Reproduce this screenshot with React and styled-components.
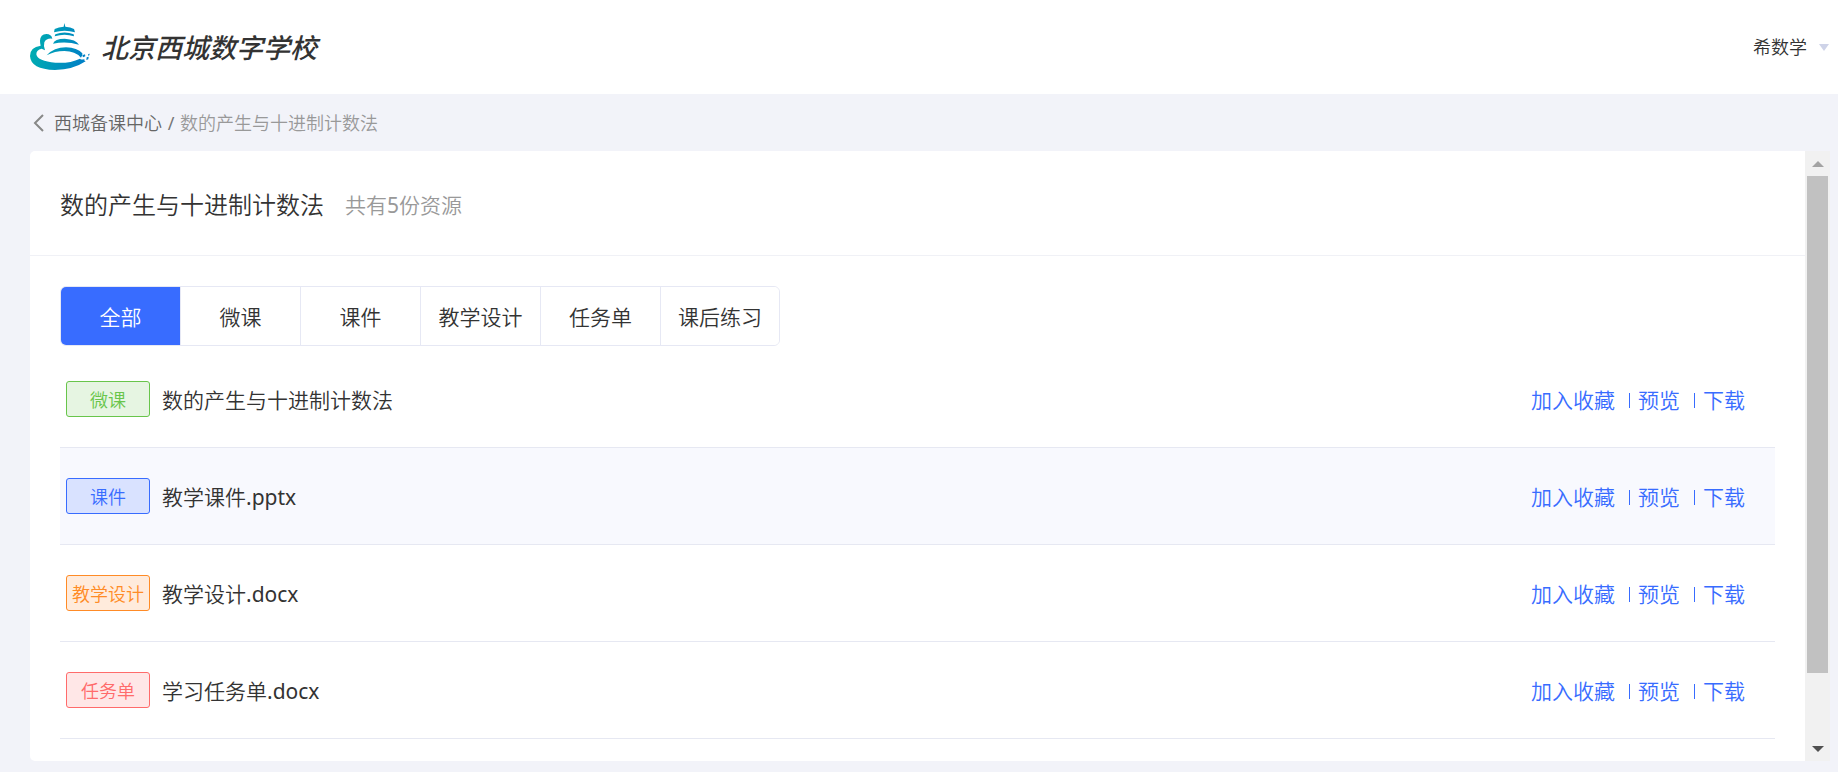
import React from 'react';
import styled, { createGlobalStyle } from 'styled-components';

const GlobalStyle = createGlobalStyle`
	* {
		box-sizing: border-box;
	}

	body {
		margin: 0;
		background: #f2f3f9;
		color: #333;
		font-family: 'Noto Sans', 'Noto Sans CJK SC DemiLight', 'Noto Sans CJK SC', sans-serif;
		font-weight: 400;
	}

	button {
		padding: 0;
		border: 0;
		background: none;
		color: inherit;
		font: inherit;
		cursor: pointer;
	}

	a {
		color: inherit;
		text-decoration: none;
	}
`;

const Page = styled.div`
	display: flex;
	flex-direction: column;
	height: 100vh;
	padding-bottom: 11px;
`;

const Header = styled.header`
	display: flex;
	align-items: center;
	justify-content: space-between;
	flex: none;
	height: 94px;
	padding: 0 9px 0 30px;
	background: #fff;
`;

const Brand = styled.a`
	display: flex;
	align-items: center;
	gap: 11px;
`;

const BrandName = styled.span`
	font-family: 'Noto Sans CJK SC', sans-serif;
	font-size: 27px;
	line-height: 36px;
	font-style: italic;
	font-weight: 500;
`;

const UserButton = styled.button`
	display: flex;
	align-items: center;
	gap: 12px;
	font-size: 18px;
	line-height: 24px;
`;

const Breadcrumb = styled.nav`
	display: flex;
	align-items: center;
	flex: none;
	height: 57px;
	padding: 0 33px;
	color: #999;
	font-size: 18px;
	line-height: 24px;
`;

const BackLink = styled.a`
	display: flex;
	align-items: center;
	gap: 9px;
	color: #666;
`;

const Slash = styled.span`
	width: 18px;
	color: #777;
	text-align: center;
`;

const Panel = styled.div`
	display: flex;
	flex: 1;
	min-height: 0;
	margin: 0 8px 0 30px;
	border-radius: 5px 0 0 5px;
	background: #fff;
	overflow: hidden;
`;

const Content = styled.main`
	flex: 1;
	min-width: 0;
	overflow-y: auto;
	scrollbar-width: none;
`;

const TitleBar = styled.div`
	display: flex;
	align-items: center;
	gap: 21px;
	height: 105px;
	padding: 3px 30px 0;
	border-bottom: 1px solid #f0f1f6;
`;

const Title = styled.h1`
	margin: 0;
	font-size: 24px;
	line-height: 36px;
	font-weight: inherit;
`;

const Count = styled.span`
	color: #999;
	font-size: 21px;
	line-height: 36px;
`;

const Body = styled.div`
	padding: 30px 30px 100px;
`;

const Tabs = styled.div`
	display: inline-flex;
	border: 1px solid #e6e8f4;
	border-radius: 6px;
	overflow: hidden;
	vertical-align: top;
`;

const Tab = styled.button`
	width: 120px;
	height: 58px;
	background: ${(props) => (props.$active ? '#386cff' : '#fff')};
	color: ${(props) => (props.$active ? '#fff' : '#333')};
	font-size: 21px;

	& + & {
		border-left: 1px solid #e6e8f4;
	}

	&:first-child,
	&:last-child {
		width: 119px;
	}
`;

const List = styled.ul`
	margin: 5px 0 0;
	padding: 0;
	list-style: none;
`;

const Row = styled.li`
	display: flex;
	align-items: center;
	height: 97px;
	padding: 0 30px 0 6px;
	border-bottom: 1px solid #e6e8f2;
	background: ${(props) => (props.$active ? '#f8f9fe' : '#fff')};
`;

const Tag = styled.span`
	flex: none;
	width: 84px;
	padding-top: 2px;
	border: 1px solid ${(props) => props.$color};
	border-radius: 3px;
	background: ${(props) => props.$background};
	color: ${(props) => props.$color};
	font-size: 18px;
	line-height: 32px;
	text-align: center;
`;

const FileName = styled.span`
	flex: 1;
	margin-left: 12px;
	padding-top: 2px;
	font-size: 21px;
	line-height: 36px;
`;

const Actions = styled.div`
	display: flex;
	align-items: center;
	padding-top: 2px;
	color: #386cff;
	font-size: 21px;
	line-height: 36px;
`;

const Divider = styled.span`
	width: 1px;
	height: 15px;
	margin: 0 8px 0 14px;
	background: #386cff;
`;

const ScrollBar = styled.div`
	display: flex;
	flex-direction: column;
	flex: none;
	width: 25px;
	background: #f1f1f1;
`;

const ScrollButton = styled.button`
	display: flex;
	align-items: center;
	justify-content: center;
	flex: none;
	height: 25px;
`;

const ScrollTrack = styled.div`
	flex: 1;
	padding: 0 2px;
`;

const ScrollThumb = styled.div`
	background: #c1c1c1;
`;

const tabs = [ '全部', '微课', '课件', '教学设计', '任务单', '课后练习' ];

const resources = [
	{ type: '微课', name: '数的产生与十进制计数法', color: '#68c54b', background: '#e6f5e2' },
	{ type: '课件', name: '教学课件.pptx', color: '#386cff', background: '#d9e2ff' },
	{ type: '教学设计', name: '教学设计.docx', color: '#ff8b26', background: '#ffebdc' },
	{ type: '任务单', name: '学习任务单.docx', color: '#ff6b6b', background: '#ffe7e7' }
];

const Logo = () => (
	<svg width="60" height="48" viewBox="0 0 180 144" fill="url(#brand)" aria-hidden="true">
		<defs>
			<linearGradient id="brand" gradientUnits="userSpaceOnUse" x1="0" y1="60" x2="165" y2="90">
				<stop offset="0" stopColor="#00aeb0" />
				<stop offset="1" stopColor="#0080c6" />
			</linearGradient>
		</defs>
		<path d="M103 0L106 11Q122 12 132 18L135 28Q104 18 72 28L74 18Q86 12 101 11Z" />
		<path d="M76 34Q104 23 131 34L132 40Q104 31 74 40Z" />
		<path d="M69 62Q74 47 104 47Q138 49 147 65Q108 53 69 62Z" />
		<path d="M50 97Q72 73 108 73Q142 74 157 91Q159 98 153 104Q136 84 103 84Q74 84 50 97Z" />
		<path d="M67 47Q64 33 49 33Q31 34 30 53Q30 61 32 68Q0 72 0 99Q2 139 75 141Q130 140 167 115Q161 114 163 108Q155 112 150 107Q118 122 76 119Q23 115 19 94Q19 80 35 77L45 82Q40 67 43 58Q49 45 67 47Z" />
		<path d="M157 97L165 94L166 100L159 103ZM170 103L176 101L175 109L169 111ZM175 93L179 92L178 97L174 98Z" />
	</svg>
);

const Arrow = ({ up, color, width = 12, height = 6 }) => (
	<svg width={width} height={height} viewBox="0 0 12 6" preserveAspectRatio="none" fill={color} aria-hidden="true">
		<path d={up ? 'M0 6L6 0L12 6Z' : 'M0 0L12 0L6 6Z'} />
	</svg>
);

class App extends React.Component {
	constructor(props) {
		super(props);
		this.content = React.createRef();
		this.state = {
			tab: '全部',
			thumbTop: 0,
			thumbHeight: 0
		};
	}

	componentDidMount() {
		this.updateThumb();
		window.addEventListener('resize', this.updateThumb);
	}

	componentWillUnmount() {
		window.removeEventListener('resize', this.updateThumb);
	}

	// thumb size and place as a share of the track between the two arrows
	updateThumb = () => {
		const { scrollTop, scrollHeight, clientHeight } = this.content.current;
		const track = clientHeight - 50;
		this.setState({
			thumbTop: Math.round(scrollTop / scrollHeight * track),
			thumbHeight: Math.round(clientHeight / scrollHeight * track)
		});
	};

	scroll = (distance) => {
		this.content.current.scrollBy({ top: distance });
	};

	render() {
		const { tab, thumbTop, thumbHeight } = this.state;
		const rows = resources.filter((item) => tab === '全部' || item.type === tab).map((item) => {
			return (
				<Row key={item.name} $active={item.type === '课件'}>
					<Tag $color={item.color} $background={item.background}>
						{item.type}
					</Tag>
					<FileName>{item.name}</FileName>
					<Actions>
						<button type="button">加入收藏</button>
						<Divider />
						<button type="button">预览</button>
						<Divider />
						<button type="button">下载</button>
					</Actions>
				</Row>
			);
		});

		return (
			<Page>
				<GlobalStyle />
				<Header>
					<Brand href="#">
						<Logo />
						<BrandName>北京西城数字学校</BrandName>
					</Brand>
					<UserButton type="button">
						希数学
						<Arrow color="#ced3e8" width={10} height={7} />
					</UserButton>
				</Header>
				<Breadcrumb>
					<BackLink href="#">
						<svg width="12" height="18" viewBox="0 0 12 18" fill="none" stroke="#888" strokeWidth="2" aria-hidden="true">
							<path d="M10 1L2 9L10 17" />
						</svg>
						西城备课中心
					</BackLink>
					<Slash>/</Slash>
					<span>数的产生与十进制计数法</span>
				</Breadcrumb>
				<Panel>
					<Content ref={this.content} onScroll={this.updateThumb}>
						<TitleBar>
							<Title>数的产生与十进制计数法</Title>
							<Count>共有5份资源</Count>
						</TitleBar>
						<Body>
							<Tabs>
								{tabs.map((name) => (
									<Tab
										key={name}
										type="button"
										$active={name === tab}
										onClick={() => this.setState({ tab: name }, this.updateThumb)}
									>
										{name}
									</Tab>
								))}
							</Tabs>
							<List>{rows}</List>
						</Body>
					</Content>
					<ScrollBar>
						<ScrollButton type="button" aria-label="向上" onClick={() => this.scroll(-97)}>
							<Arrow up color="#a3a3a3" />
						</ScrollButton>
						<ScrollTrack>
							<ScrollThumb style={{ height: thumbHeight, marginTop: thumbTop }} />
						</ScrollTrack>
						<ScrollButton type="button" aria-label="向下" onClick={() => this.scroll(97)}>
							<Arrow color="#505050" />
						</ScrollButton>
					</ScrollBar>
				</Panel>
			</Page>
		);
	}
}

export default App;
